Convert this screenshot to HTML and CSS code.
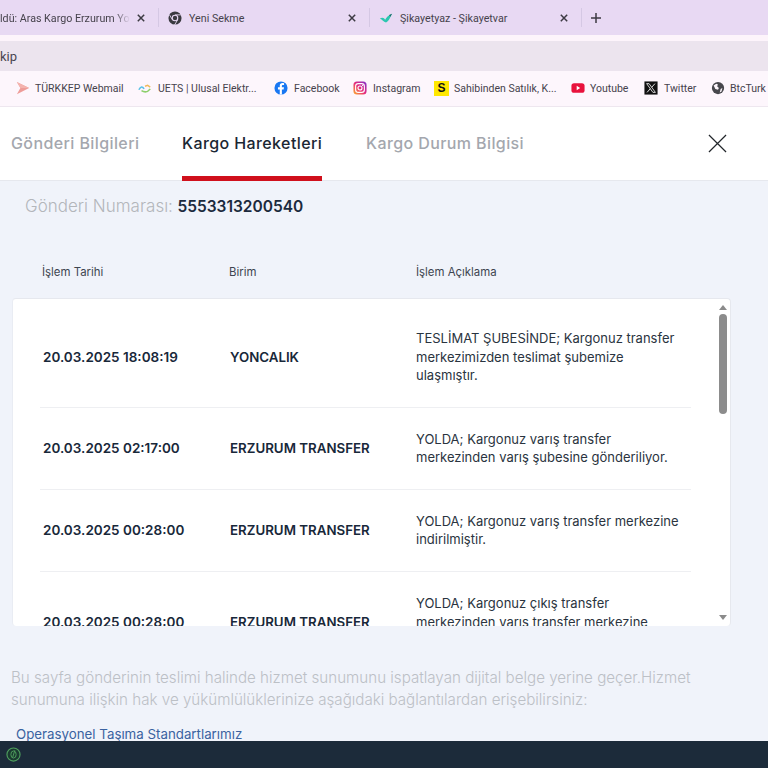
FILE: index.html
```html
<!DOCTYPE html>
<html lang="tr">
<head>
<meta charset="utf-8">
<title>Kargo Hareketleri</title>
<link rel="stylesheet" href="styles.css">
</head>
<body>
<header class="browser">
  <div class="tabstrip">
    <div class="tab tab-first"><span class="tab-title clipped">ldü: Aras Kargo Erzurum Yoncalık</span><svg class="tab-x" viewBox="0 0 8 8"><path d="M.8.8l6.400 6.400M7.200.8.8 7.200"/></svg></div>
    <div class="tab tab-second">
      <svg class="fav" viewBox="0 0 16 16"><circle cx="8" cy="8" r="7.500" fill="#3a3a40"/><path d="M8 4.400h7M5 10 1.500 4M11 10l-3.500 6" stroke="#e8d9f3" stroke-width="1"/><circle cx="8" cy="8" r="3.800" fill="#e8d9f3"/><circle cx="8" cy="8" r="2.500" fill="#3a3a40"/></svg>
      <span class="tab-title">Yeni Sekme</span><svg class="tab-x" viewBox="0 0 8 8"><path d="M.8.8l6.400 6.400M7.200.8.8 7.200"/></svg></div>
    <div class="tab tab-third">
      <svg class="fav" viewBox="0 0 16 16"><path d="M1 8.500c3-1.500 5-.5 6 1.500 1.500-3 4-5.500 8-7-2 3-3 8-7 10C5 12.500 4 9.500 1 8.500z" fill="#2cc7b0"/><path d="M11.500 4.600 15 3c-.8 1.100-1.400 2.400-2 3.500z" fill="#1d6a66"/></svg>
      <span class="tab-title">Şikayetyaz - Şikayetvar</span><svg class="tab-x" viewBox="0 0 8 8"><path d="M.8.8l6.400 6.400M7.200.8.8 7.200"/></svg></div>
    <svg class="tab-new" viewBox="0 0 10 10"><path d="M5 0v10M0 5h10"/></svg>
  </div>
  <div class="addressgap"></div>
  <div class="addressbar"><span class="address-text">kip</span></div>
  <nav class="bookmarks">
    <span class="bm bm-turkkep"><svg class="bm-ico" viewBox="0 0 16 16"><path d="M1 1l14 7-14 7 4-7z" fill="#ee9c98"/><path d="M1 1l14 7H5z" fill="#f4b3ae"/></svg>TÜRKKEP Webmail</span>
    <span class="bm bm-uets"><svg class="bm-ico" viewBox="0 0 16 16"><path d="M1 10c2-4 4-4 6-1" fill="none" stroke="#59c2e6" stroke-width="1.800"/><path d="M4 11c3 2 7 2 10-2" fill="none" stroke="#8ccf6b" stroke-width="1.800"/><path d="M8 6l3-1 3 2" fill="none" stroke="#f0b95a" stroke-width="1.600"/></svg>UETS | Ulusal Elektr...</span>
    <span class="bm bm-fb"><svg class="bm-ico" viewBox="0 0 16 16"><circle cx="8" cy="8" r="7.500" fill="#1877f2"/><path d="M9 15.500V9.600h2l.4-2.400H9V5.900c0-.8.3-1.300 1.400-1.300h1.100V2.500c-.5-.1-1.100-.2-1.800-.2-2 0-3.100 1.100-3.100 3.200v1.700H4.500v2.400h2.100v5.900z" fill="#fff"/></svg>Facebook</span>
    <span class="bm bm-ig"><svg class="bm-ico" viewBox="0 0 16 16"><defs><linearGradient id="ig" x1="0" y1="1" x2="1" y2="0"><stop offset="0" stop-color="#fdb32b"/><stop offset=".5" stop-color="#e6287d"/><stop offset="1" stop-color="#7a35d0"/></linearGradient></defs><rect x=".5" y=".5" width="15" height="15" rx="4" fill="url(#ig)"/><rect x="3" y="3" width="10" height="10" rx="3" fill="none" stroke="#fff" stroke-width="1.300"/><circle cx="8" cy="8" r="2.300" fill="none" stroke="#fff" stroke-width="1.300"/><circle cx="11" cy="5" r=".7" fill="#fff"/></svg>Instagram</span>
    <span class="bm bm-sahibinden"><span class="s-logo">S</span>Sahibinden Satılık, K...</span>
    <span class="bm bm-yt"><svg class="bm-ico" viewBox="0 0 16 16"><rect x=".5" y="2.500" width="15" height="11" rx="3" fill="#e8123c"/><path d="M6.500 5.500v5l4-2.500z" fill="#fff"/></svg>Youtube</span>
    <span class="bm bm-tw"><svg class="bm-ico" viewBox="0 0 16 16"><rect width="15" height="15" x=".5" y=".5" fill="#111"/><path d="M3 3h2.800l7.200 10h-2.800z" fill="none" stroke="#fff" stroke-width=".9"/><path d="M12.500 3 8.800 7.200M7.200 8.800 3.500 13" stroke="#fff" stroke-width="1"/></svg>Twitter</span>
    <span class="bm bm-btc"><svg class="bm-ico" viewBox="0 0 16 16"><circle cx="8" cy="8" r="7" fill="#47474c"/><path d="M3 5l3-2 2 1-1 2 2 2-1 2-3-1-1-2zM11 9l2-1-1 4-2 1z" fill="#fdf6fc"/></svg>BtcTurk</span>
  </nav>
</header>

<main class="page">
  <div class="tabs">
    <div class="page-tab page-tab-1">Gönderi Bilgileri</div>
    <div class="page-tab page-tab-2 active">Kargo Hareketleri</div>
    <div class="page-tab page-tab-3">Kargo Durum Bilgisi</div>
    <svg class="close" viewBox="0 0 20 20"><path d="M1 1l18 18M19 1 1 19" stroke="#22262b" stroke-width="1.300" fill="none"/></svg>
  </div>
  <div class="content">
    <p class="shipment"><span class="shipment-label">Gönderi Numarası:</span> <strong class="shipment-no">5553313200540</strong></p>
    <div class="columns">
      <span class="col-a">İşlem Tarihi</span>
      <span class="col-b">Birim</span>
      <span class="col-c">İşlem Açıklama</span>
    </div>
    <section class="card">
      <div class="scroll-area">
        <div class="row row-1">
          <span class="cell-date">20.03.2025 18:08:19</span>
          <span class="cell-unit">YONCALIK</span>
          <span class="cell-desc">TESLİMAT ŞUBESİNDE; Kargonuz transfer<br>merkezimizden teslimat şubemize<br>ulaşmıştır.</span>
        </div>
        <div class="row row-2">
          <span class="cell-date">20.03.2025 02:17:00</span>
          <span class="cell-unit">ERZURUM TRANSFER</span>
          <span class="cell-desc">YOLDA; Kargonuz varış transfer<br>merkezinden varış şubesine gönderiliyor.</span>
        </div>
        <div class="row row-3">
          <span class="cell-date">20.03.2025 00:28:00</span>
          <span class="cell-unit">ERZURUM TRANSFER</span>
          <span class="cell-desc">YOLDA; Kargonuz varış transfer merkezine<br>indirilmiştir.</span>
        </div>
        <div class="row row-4">
          <span class="cell-date">20.03.2025 00:28:00</span>
          <span class="cell-unit">ERZURUM TRANSFER</span>
          <span class="cell-desc">YOLDA; Kargonuz çıkış transfer<br>merkezinden varış transfer merkezine<br>ulaşmıştır.</span>
        </div>
      </div>
      <div class="scrollbar">
        <span class="arrow-up"></span>
        <span class="thumb"></span>
        <span class="arrow-down"></span>
      </div>
    </section>
    <p class="notice">Bu sayfa gönderinin teslimi halinde hizmet sunumunu ispatlayan dijital belge yerine geçer.Hizmet sunumuna ilişkin hak ve yükümlülüklerinize aşağıdaki bağlantılardan erişebilirsiniz:</p>
    <a class="link">Operasyonel Taşıma Standartlarımız</a>
  </div>
</main>
<footer class="taskbar">
  <svg class="status" viewBox="0 0 16 16"><circle cx="8" cy="8" r="7" fill="#1a3a30" stroke="#4f9f5e" stroke-width="1.200"/><ellipse cx="8" cy="8" rx="2.800" ry="3.800" fill="none" stroke="#4f9f5e" stroke-width="1"/><path d="M9.400 3.500 7 11.500" stroke="#4f9f5e" stroke-width="1"/></svg>
</footer>
</body>
</html>
```
FILE: styles.css
```css
* { box-sizing: border-box; }
html, body { margin: 0; padding: 0; }
body { width: 768px; height: 768px; overflow: hidden; display: flex; flex-direction: column; font-family: "Inter", "Noto Sans", sans-serif; background: #f0f3fa; }

.browser { flex: none; font-family: "Roboto", "Noto Sans", sans-serif; color: #46424c; }
.tabstrip { height: 35px; background: #e8d9f3; display: flex; align-items: center; font-size: 10.700px; overflow: hidden; }
.tab { display: flex; align-items: center; height: 19px; flex: none; border-right: 1px solid #d5c8e4; padding-right: 13px; }
.tab-first { width: 159px; }
.tab-second { width: 211px; padding-left: 9px; }
.tab-third { width: 212px; padding-left: 9px; }
.tab-title { flex: 1; min-width: 0; margin-left: 7px; margin-right: 7px; padding-top: 1px; white-space: nowrap; overflow: hidden; }
.tab-first .tab-title { margin-left: 0; }
.clipped { -webkit-mask-image: linear-gradient(90deg, #000 88%, transparent 100%); mask-image: linear-gradient(90deg, #000 88%, transparent 100%); }
.tab-x { width: 8px; height: 8px; flex: none; fill: none; stroke: #3c3a42; stroke-width: 1.500; }
.fav { width: 14px; height: 14px; flex: none; }
.tab-new { width: 10px; height: 10px; margin-left: 9px; fill: none; stroke: #3c3a42; stroke-width: 1.500; }
.addressgap { height: 6px; background: #fdf4fb; }
.addressbar { height: 30px; background: #ece4ee; display: flex; align-items: center; font-size: 13px; }
.address-text { color: #4a4650; }
.bookmarks { height: 36px; background: #fdf6fc; border-bottom: 1px solid #eee7ef; padding-bottom: 1px; display: flex; align-items: center; font-size: 10.500px; padding-left: 16px; white-space: nowrap; overflow: hidden; }
.bm { display: flex; align-items: center; gap: 6px; flex: none; }
.bm-ico { width: 14px; height: 14px; flex: none; }
.bm-turkkep { width: 122px; gap: 5px; }
.bm-uets { width: 136px; }
.bm-fb { width: 79px; }
.bm-ig { width: 81px; }
.bm-sahibinden { width: 137px; gap: 5px; }
.bm-yt { width: 73px; gap: 5px; }
.bm-tw { width: 67px; }
.bm-btc { width: 57px; gap: 5px; }
.s-logo { width: 15px; height: 15px; flex: none; background: #ffe800; color: #111; font-weight: 700; font-size: 12px; line-height: 15px; text-align: center; font-family: "Liberation Sans", sans-serif; }

.page { flex: 1; min-height: 0; display: flex; flex-direction: column; overflow: hidden; }
.tabs { height: 74px; flex: none; background: #fff; border-bottom: 1px solid #e6e8ee; display: flex; padding-left: 11px; position: relative; font-size: 16px; font-weight: 500; color: #a4a7ae; }
.page-tab { height: 73px; line-height: 73px; letter-spacing: .4px; white-space: nowrap; }
.page-tab-1 { width: 171px; }
.page-tab-2 { width: 184px; }
.page-tab.active { color: #1b2733; }
.page-tab-2.active { position: relative; }
.page-tab-2.active::after { content: ""; position: absolute; left: 0; width: 140px; bottom: -1px; height: 5px; background: #d0101c; }
.close { position: absolute; right: 41px; top: 27px; width: 19px; height: 19px; }

.content { flex: 1; min-height: 0; padding: 0 0 0 12px; overflow: hidden; }
.shipment { margin: 14px 0 0 13px; line-height: 22px; color: #b3b6bb; font-weight: 300; }
.shipment-label { font-size: 17px; }
.shipment-no { font-size: 15.500px; color: #1b2a3d; font-weight: 600; }
.columns { display: flex; margin: 45px 0 0 30px; height: 18px; align-items: center; font-size: 11.400px; color: #3d4550; }
.col-a { width: 187px; }
.col-b { width: 187px; }
.card { margin-top: 17px; width: 719px; height: 328px; background: #fff; border-top: 1px solid #e6e8ee; border-right: 1px solid #e6e8ee; border-left: 1px solid #e9ecf3; border-radius: 4px; display: flex; overflow: hidden; }
.scroll-area { flex: 1; padding-left: 27px; min-width: 0; }
.row { width: 651px; display: flex; align-items: center; border-bottom: 1px solid #eeeff2; }
.row-1 { height: 109px; padding-top: 8px; }
.row-2, .row-3 { height: 82px; padding-bottom: 1px; }
.row-4 { height: 100px; border-bottom: 0; }
.cell-date { width: 187px; flex: none; padding-left: 3px; font-size: 13.500px; font-weight: 600; color: #18283a; white-space: nowrap; }
.cell-unit { width: 187px; flex: none; padding-left: 3px; font-size: 13.300px; font-weight: 600; color: #18283a; white-space: nowrap; }
.cell-desc { flex: 1; padding-left: 2px; font-size: 13px; line-height: 18.500px; color: #2a3440; white-space: nowrap; }
.scrollbar { width: 14px; flex: none; display: flex; flex-direction: column; align-items: center; padding: 6px 0 0; position: relative; }
.arrow-up { width: 0; height: 0; border-left: 4px solid transparent; border-right: 4px solid transparent; border-bottom: 5px solid #8b8b8b; }
.thumb { width: 8px; height: 100px; margin-top: 4px; background: #8c8c8c; border-radius: 4px; }
.arrow-down { width: 0; height: 0; position: absolute; bottom: 6px; border-left: 4px solid transparent; border-right: 4px solid transparent; border-top: 5px solid #8b8b8b; }
.notice { margin: 41px 50px 0 -1px; font-size: 15.150px; line-height: 21.500px; color: #bcc0c6; font-weight: 300; }
.link { display: block; margin: 15px 0 0 4px; font-size: 13.300px; color: #3a62a0; line-height: 18px; }
.taskbar { flex: none; height: 27px; background: #1c2b3a; display: flex; align-items: center; padding-left: 6px; }
.status { width: 15px; height: 15px; }
```
